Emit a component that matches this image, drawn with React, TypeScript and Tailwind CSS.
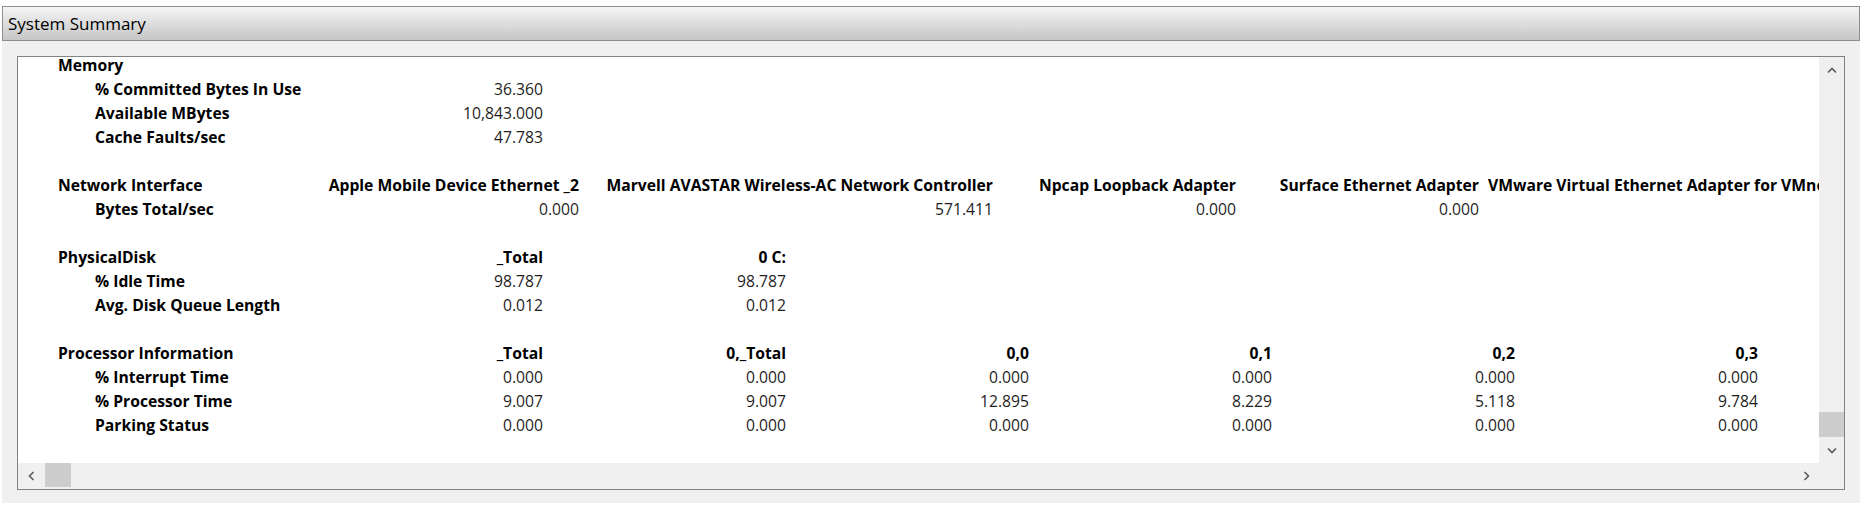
import React from 'react';

type Row = { label: string; values: string[] };

interface Section {
    title: string;
    cols: string;
    heads: string[];
    rows: Row[];
    openLast?: boolean;
}

const sections: Section[] = [
    {
        title: 'Memory',
        cols: 'grid-cols-[282px_243px]',
        heads: [''],
        rows: [
            { label: '% Committed Bytes In Use', values: ['36.360'] },
            { label: 'Available MBytes', values: ['10,843.000'] },
            { label: 'Cache Faults/sec', values: ['47.783'] },
        ],
    },
    {
        title: 'Network Interface',
        cols: 'grid-cols-[282px_279px_414px_243px_243px_420px]',
        heads: [
            'Apple Mobile Device Ethernet _2',
            'Marvell AVASTAR Wireless-AC Network Controller',
            'Npcap Loopback Adapter',
            'Surface Ethernet Adapter',
            'VMware Virtual Ethernet Adapter for VMnet1',
        ],
        rows: [{ label: 'Bytes Total/sec', values: ['0.000', '571.411', '0.000', '0.000', '0.000'] }],
        openLast: true,
    },
    {
        title: 'PhysicalDisk',
        cols: 'grid-cols-[282px_243px_243px]',
        heads: ['_Total', '0 C:'],
        rows: [
            { label: '% Idle Time', values: ['98.787', '98.787'] },
            { label: 'Avg. Disk Queue Length', values: ['0.012', '0.012'] },
        ],
    },
    {
        title: 'Processor Information',
        cols: 'grid-cols-[282px_243px_243px_243px_243px_243px_243px]',
        heads: ['_Total', '0,_Total', '0,0', '0,1', '0,2', '0,3'],
        rows: [
            { label: '% Interrupt Time', values: ['0.000', '0.000', '0.000', '0.000', '0.000', '0.000'] },
            { label: '% Processor Time', values: ['9.007', '9.007', '12.895', '8.229', '5.118', '9.784'] },
            { label: 'Parking Status', values: ['0.000', '0.000', '0.000', '0.000', '0.000', '0.000'] },
        ],
    },
];

const Chevron = ({ dir }: { dir: 'up' | 'down' | 'left' | 'right' }) => {
    const d = {
        up: 'M1 5.5 L5 1.5 L9 5.5',
        down: 'M1 1.5 L5 5.5 L9 1.5',
        left: 'M5.5 1 L1.5 5 L5.5 9',
        right: 'M1.5 1 L5.5 5 L1.5 9',
    }[dir];
    const vertical = dir === 'up' || dir === 'down';
    return (
        <svg width={vertical ? 10 : 7} height={vertical ? 7 : 10} viewBox={vertical ? '0 0 10 7' : '0 0 7 10'}>
            <path d={d} stroke="#5a5a5a" strokeWidth="1.6" fill="none" />
        </svg>
    );
};

const SectionGrid = ({ s }: { s: Section }) => (
    <div className={`grid w-max auto-rows-[24px] ${s.cols}`}>
        <div className="pl-[40px] font-bold text-black">{s.title}</div>
        {s.heads.map((h, i) => {
            const open = s.openLast && i === s.heads.length - 1;
            return (
                <div
                    key={i}
                    className={
                        open
                            ? 'flex justify-start pl-[9px] whitespace-nowrap font-bold text-black'
                            : 'flex justify-end whitespace-nowrap font-bold text-black'
                    }
                >
                    {h}
                </div>
            );
        })}
        {s.rows.map((r) => (
            <React.Fragment key={r.label}>
                <div className="pl-[77px] font-bold text-black whitespace-nowrap">{r.label}</div>
                {r.values.map((v, i) => (
                    <div key={i} className="flex justify-end whitespace-nowrap text-[#1e1e1e]">
                        {v}
                    </div>
                ))}
            </React.Fragment>
        ))}
    </div>
);

export default function App() {
    return (
        <div className="w-[1868px] h-[510px] bg-white pt-[6px] pl-[2px] font-['Open_Sans','Noto_Sans',sans-serif]">
            <div className="w-[1858px] h-[497px] bg-[#f0f0f0] flex flex-col">
                {/* title bar */}
                <div className="h-[35px] border border-[#8e8e8e] bg-linear-to-b from-[#f5f5f5] to-[#c6c6c6] flex items-center pl-[5px] text-[17px] text-black">
                    System Summary
                </div>

                <div className="mt-[15px] ml-[15px] w-[1828px] h-[434px] border border-[#828282] bg-white flex flex-col">
                    <div className="flex flex-1 min-h-0">
                        <div className="flex-1 overflow-hidden text-[15.7px] leading-[24px]">
                            <div className="-mt-[4px] flex flex-col gap-[24px]">
                                {sections.map((s) => (
                                    <SectionGrid key={s.title} s={s} />
                                ))}
                            </div>
                        </div>
                        {/* vertical scrollbar */}
                        <div className="w-[25px] bg-[#f0f0f0] flex flex-col">
                            <div className="h-[26px] flex items-center justify-center">
                                <Chevron dir="up" />
                            </div>
                            <div className="flex-1" />
                            <div className="h-[25px] bg-[#cdcdcd]" />
                            <div className="h-[26px] flex items-center justify-center">
                                <Chevron dir="down" />
                            </div>
                        </div>
                    </div>
                    {/* horizontal scrollbar */}
                    <div className="h-[26px] bg-[#f0f0f0] flex">
                        <div className="w-[27px] flex items-center justify-center">
                            <Chevron dir="left" />
                        </div>
                        <div className="w-[26px] h-[24px] bg-[#cdcdcd]" />
                        <div className="flex-1" />
                        <div className="w-[26px] flex items-center justify-center">
                            <Chevron dir="right" />
                        </div>
                        <div className="w-[25px]" />
                    </div>
                </div>
            </div>
        </div>
    );
}
